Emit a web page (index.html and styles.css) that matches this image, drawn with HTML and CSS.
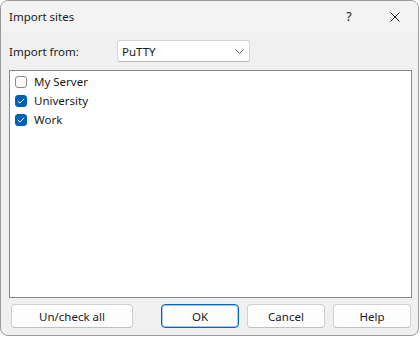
FILE: index.html
```html
<!DOCTYPE html>
<html lang="en">
  <head>
    <meta charset="UTF-8" />
    <title>Import sites</title>
    <link rel="stylesheet" href="styles.css">
  </head>
  <body>
    <div class="window">
      <!-- Title bar -->
      <div class="titlebar">
        <span class="title">Import sites</span>
        <span class="caption-btn">?</span>
        <span class="caption-btn">
          <svg width="10" height="10" viewBox="0 0 10 10">
            <path d="M0.5 0.5 L9.5 9.5 M9.5 0.5 L0.5 9.5" stroke="#1a1a1a" stroke-width="1" fill="none" />
          </svg>
        </span>
      </div>

      <!-- Dialog body -->
      <div class="content">
        <div class="import-row">
          <label class="import-label">Import from:</label>
          <div class="combo">
            <span>PuTTY</span>
            <svg width="9" height="5" viewBox="0 0 9 5">
              <path d="M0.5 0.5 L4.5 4.5 L8.5 0.5" stroke="#606060" stroke-width="1" fill="none" />
            </svg>
          </div>
        </div>

        <div class="site-list">
          <div class="site-row">
            <span class="check"></span>
            <span>My Server</span>
          </div>
          <div class="site-row">
            <span class="check checked">
              <svg width="8" height="6" viewBox="0 0 8 6">
                <path d="M0.8 3.2 L2.9 5 L7.2 0.8" stroke="#fff" stroke-width="1" fill="none" />
              </svg>
            </span>
            <span>University</span>
          </div>
          <div class="site-row">
            <span class="check checked">
              <svg width="8" height="6" viewBox="0 0 8 6">
                <path d="M0.8 3.2 L2.9 5 L7.2 0.8" stroke="#fff" stroke-width="1" fill="none" />
              </svg>
            </span>
            <span>Work</span>
          </div>
        </div>

        <div class="button-row">
          <button class="btn btn-wide">Un/check all</button>
          <div class="button-group">
            <button class="btn btn-default">OK</button>
            <button class="btn">Cancel</button>
            <button class="btn">Help</button>
          </div>
        </div>
      </div>
    </div>
  </body>
</html>
```

FILE: styles.css
```css
/* --- Reset --- */
* {
  margin: 0;
  padding: 0;
  box-sizing: border-box;
}

body {
  font-family: "Noto Sans", "Liberation Sans", sans-serif;
  font-size: 11.5px;
  color: #1a1a1a;
  background-color: #ffffff;
}

/* --- Window frame --- */
.window {
  width: 419px;
  height: 336px;
  border: 1px solid #9a9a9a;
  border-radius: 8px;
  background-color: #f0f0f0;
  overflow: hidden;
  display: flex;
  flex-direction: column;
}

/* --- Title bar --- */
.titlebar {
  height: 31px;
  display: flex;
  align-items: center;
  background-color: #f3f3f3;
}
.title {
  flex: 1;
  padding-left: 8px;
}
.caption-btn {
  width: 46px;
  height: 31px;
  display: flex;
  align-items: center;
  justify-content: center;
  font-size: 12.5px;
}

/* --- Body --- */
.content {
  flex: 1;
  display: flex;
  flex-direction: column;
  padding: 8px 6px 7px 8px;
}
.import-row {
  display: flex;
  align-items: center;
  height: 22px;
}
.import-label {
  width: 108px;
}
.combo {
  width: 133px;
  height: 22px;
  display: flex;
  align-items: center;
  justify-content: space-between;
  padding: 0 5px 0 4px;
  background-color: #ffffff;
  border: 1px solid #d6d6d6;
  border-bottom-color: #b8b8b8;
  border-radius: 3px;
}

/* --- Site list --- */
.site-list {
  flex: 1;
  margin-top: 8px;
  background-color: #ffffff;
  border: 1px solid #828790;
  padding: 1px 5px;
}
.site-row {
  height: 19px;
  display: flex;
  align-items: center;
  gap: 7px;
}
.check {
  width: 12px;
  height: 12px;
  border: 1px solid #8a8a8a;
  border-radius: 3px;
  background-color: #fbfbfb;
  display: flex;
  align-items: center;
  justify-content: center;
}
.check.checked {
  background-color: #005fb8;
  border-color: #005fb8;
}

/* --- Buttons --- */
.button-row {
  display: flex;
  justify-content: space-between;
  margin-top: 6px;
  padding: 0 1px 0 2px;
}
.button-group {
  display: flex;
  gap: 8px;
}
.btn {
  font-family: inherit;
  font-size: 11.5px;
  color: #1a1a1a;
  width: 78px;
  height: 24px;
  background-color: #fdfdfd;
  border: 1px solid #d0d0d0;
  border-bottom-color: #c0c0c0;
  border-radius: 4px;
}
.btn-wide {
  width: 122px;
}
.btn-default {
  border: 1px solid #0067c0;
  box-shadow: inset 0 0 0 1px rgba(0, 103, 192, 0.35);
}
```
